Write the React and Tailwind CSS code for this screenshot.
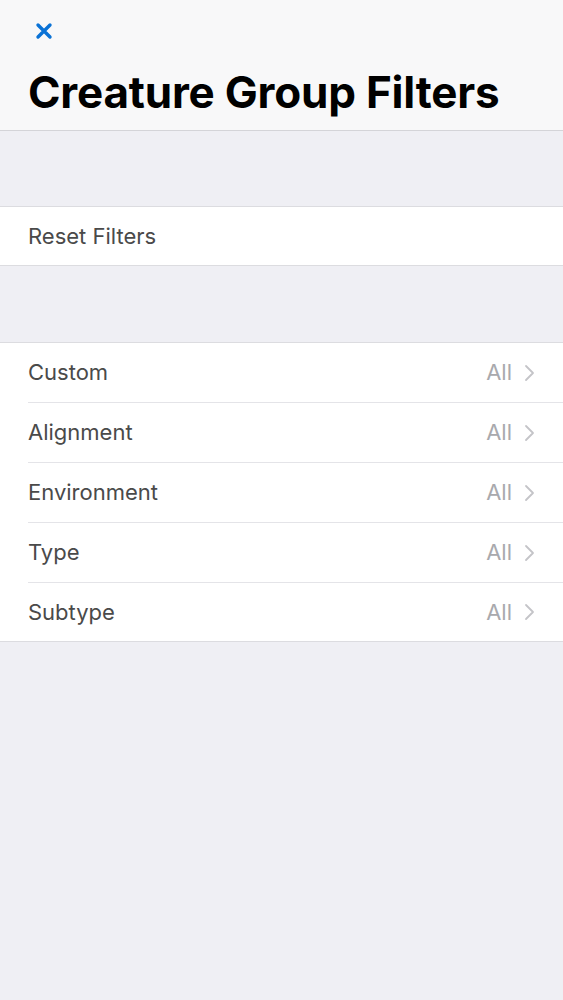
import React from "react";

const filters = ["Custom", "Alignment", "Environment", "Type", "Subtype"];

const Chevron = () => (
  <svg width="11" height="20" viewBox="0 0 11 20" fill="none">
    <path d="M2 3l7 7-7 7" stroke="#c4c4c8" strokeWidth="1.8" strokeLinecap="round" strokeLinejoin="round" />
  </svg>
);

const App = () => {
  return (
    <div className="min-h-screen w-full bg-[#efeff4] font-['Inter',sans-serif]">
      <div className="h-[131px] bg-[#f8f8f9] border-b border-[#d4d4d8] px-7 flex flex-col">
        <div className="pt-[22px] pl-[7px] h-[66px]">
          <svg width="18" height="18" viewBox="0 0 18 18">
            <path d="M3 3l12 12M15 3L3 15" stroke="#0a72d6" strokeWidth="3.4" strokeLinecap="round" />
          </svg>
        </div>
        <h1 className="text-[44px] leading-[52px] font-bold tracking-[-0.2px] text-black">
          Creature Group Filters
        </h1>
      </div>

      <div className="h-[75px]" />

      <div className="bg-white border-y border-[#dcdce0] h-[60px] flex items-center px-7">
        <span className="text-[22px] text-[#4a4a4a]">Reset Filters</span>
      </div>

      <div className="h-[76px]" />

      <div className="bg-white border-y border-[#dcdce0]">
        {filters.map((item, index) => (
          <div key={item} className="pl-7">
            <div
              className={
                "flex items-center pr-7 " +
                (index < filters.length - 1 ? "h-[60px] border-b border-[#e4e4e8]" : "h-[58px]")
              }
            >
              <span className="text-[22px] text-[#4a4a4a] flex-1">{item}</span>
              <span className="text-[22px] text-[#a9a9ad] mr-[12px]">All</span>
              <Chevron />
            </div>
          </div>
        ))}
      </div>
    </div>
  );
};

export default App;
